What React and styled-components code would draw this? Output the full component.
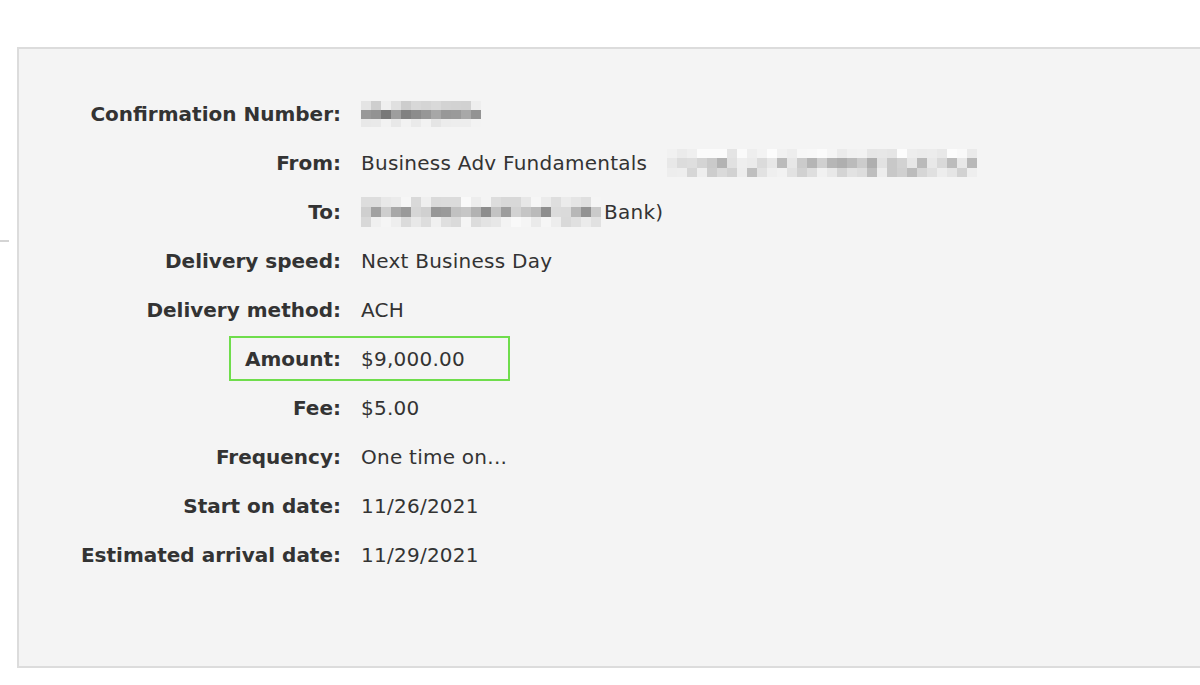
import React from "react";
import styled, { createGlobalStyle } from "styled-components";

const Global = createGlobalStyle`
  html, body { margin: 0; padding: 0; background: #ffffff; overflow: hidden; }
  body { font-family: "DejaVu Sans", Verdana, sans-serif; color: #333333; }
`;

const Page = styled.div`
  display: flex;
  align-items: flex-start;
  padding-top: 47px;
  width: 1200px;
  height: 685px;
  box-sizing: border-box;
  overflow: hidden;
`;

const Gutter = styled.div`
  flex: 0 0 17px;
  display: flex;
  flex-direction: column;
`;

const GutterRule = styled.div`
  margin-top: 193px;
  width: 9px;
  height: 2px;
  background: #d4d4d4;
`;

const Panel = styled.section`
  flex: 0 0 1220px;
  height: 621px;
  box-sizing: border-box;
  background: #f4f4f4;
  border: 2px solid #dcdcdc;
  padding-top: 40px;
`;

const Rows = styled.dl`
  margin: 0;
  display: flex;
  flex-direction: column;
`;

const Row = styled.div`
  position: relative;
  display: flex;
  align-items: center;
  height: 49px;
  font-size: 20px;

  ${(p) =>
    p.$highlight &&
    `
    &::after {
      content: "";
      position: absolute;
      left: 210px;
      top: 2px;
      width: 281px;
      height: 45px;
      box-sizing: border-box;
      border: 2px solid #6fdd4c;
      pointer-events: none;
    }
  `}
`;

const Label = styled.dt`
  flex: 0 0 322px;
  text-align: right;
  font-weight: bold;
  color: #333333;
`;

const Value = styled.dd`
  margin: 0 0 0 20px;
  display: flex;
  align-items: center;
  color: #333333;
  white-space: nowrap;
  letter-spacing: 0.25px;
`;

const Gap = styled.span`
  display: inline-block;
  width: ${(p) => p.$w}px;
`;

// Deterministic grey mosaic used to hide account details
function Mosaic({ cols, cell = 10, rows }) {
  const w = cols * cell;
  const h = rows.reduce((s, r) => s + r.h, 0);
  let y = 0;
  return (
    <svg width={w} height={h} viewBox={`0 0 ${w} ${h}`} style={{ display: "block" }}>
      {rows.map((r, ri) => {
        const top = y;
        y += r.h;
        return Array.from({ length: cols }).map((_, ci) => {
          const seed = Math.sin((ci + 1) * 12.9898 + (ri + 1) * 78.233 + r.seed) * 43758.5453;
          const f = seed - Math.floor(seed);
          const v = Math.round(r.base + f * r.spread);
          return (
            <rect
              key={`${ri}-${ci}`}
              x={ci * cell}
              y={top}
              width={cell}
              height={r.h}
              fill={`rgb(${v},${v},${v})`}
            />
          );
        });
      })}
    </svg>
  );
}

const confRows = [
  { h: 9, base: 200, spread: 40, seed: 1 },
  { h: 9, base: 110, spread: 60, seed: 2 },
  { h: 8, base: 225, spread: 20, seed: 3 },
];

const fromRows = [
  { h: 9, base: 228, spread: 25, seed: 4 },
  { h: 10, base: 170, spread: 70, seed: 5 },
  { h: 9, base: 185, spread: 60, seed: 6 },
];

const toRows = [
  { h: 10, base: 215, spread: 35, seed: 7 },
  { h: 10, base: 140, spread: 80, seed: 8 },
  { h: 10, base: 215, spread: 35, seed: 9 },
];

export default function App() {
  return (
    <>
      <Global />
      <Page>
        <Gutter>
          <GutterRule />
        </Gutter>
        <Panel>
          <Rows>
            <Row>
              <Label>Confirmation Number:</Label>
              <Value>
                <Mosaic cols={12} rows={confRows} />
              </Value>
            </Row>
            <Row>
              <Label>From:</Label>
              <Value>
                Business Adv Fundamentals
                <Gap $w={20} />
                <Mosaic cols={31} rows={fromRows} />
              </Value>
            </Row>
            <Row>
              <Label>To:</Label>
              <Value>
                <Mosaic cols={24} rows={toRows} />
                <Gap $w={3} />
                Bank)
              </Value>
            </Row>
            <Row>
              <Label>Delivery speed:</Label>
              <Value>Next Business Day</Value>
            </Row>
            <Row>
              <Label>Delivery method:</Label>
              <Value>ACH</Value>
            </Row>
            <Row $highlight>
              <Label>Amount:</Label>
              <Value>$9,000.00</Value>
            </Row>
            <Row>
              <Label>Fee:</Label>
              <Value>$5.00</Value>
            </Row>
            <Row>
              <Label>Frequency:</Label>
              <Value>One time on...</Value>
            </Row>
            <Row>
              <Label>Start on date:</Label>
              <Value>11/26/2021</Value>
            </Row>
            <Row>
              <Label>Estimated arrival date:</Label>
              <Value>11/29/2021</Value>
            </Row>
          </Rows>
        </Panel>
      </Page>
    </>
  );
}
